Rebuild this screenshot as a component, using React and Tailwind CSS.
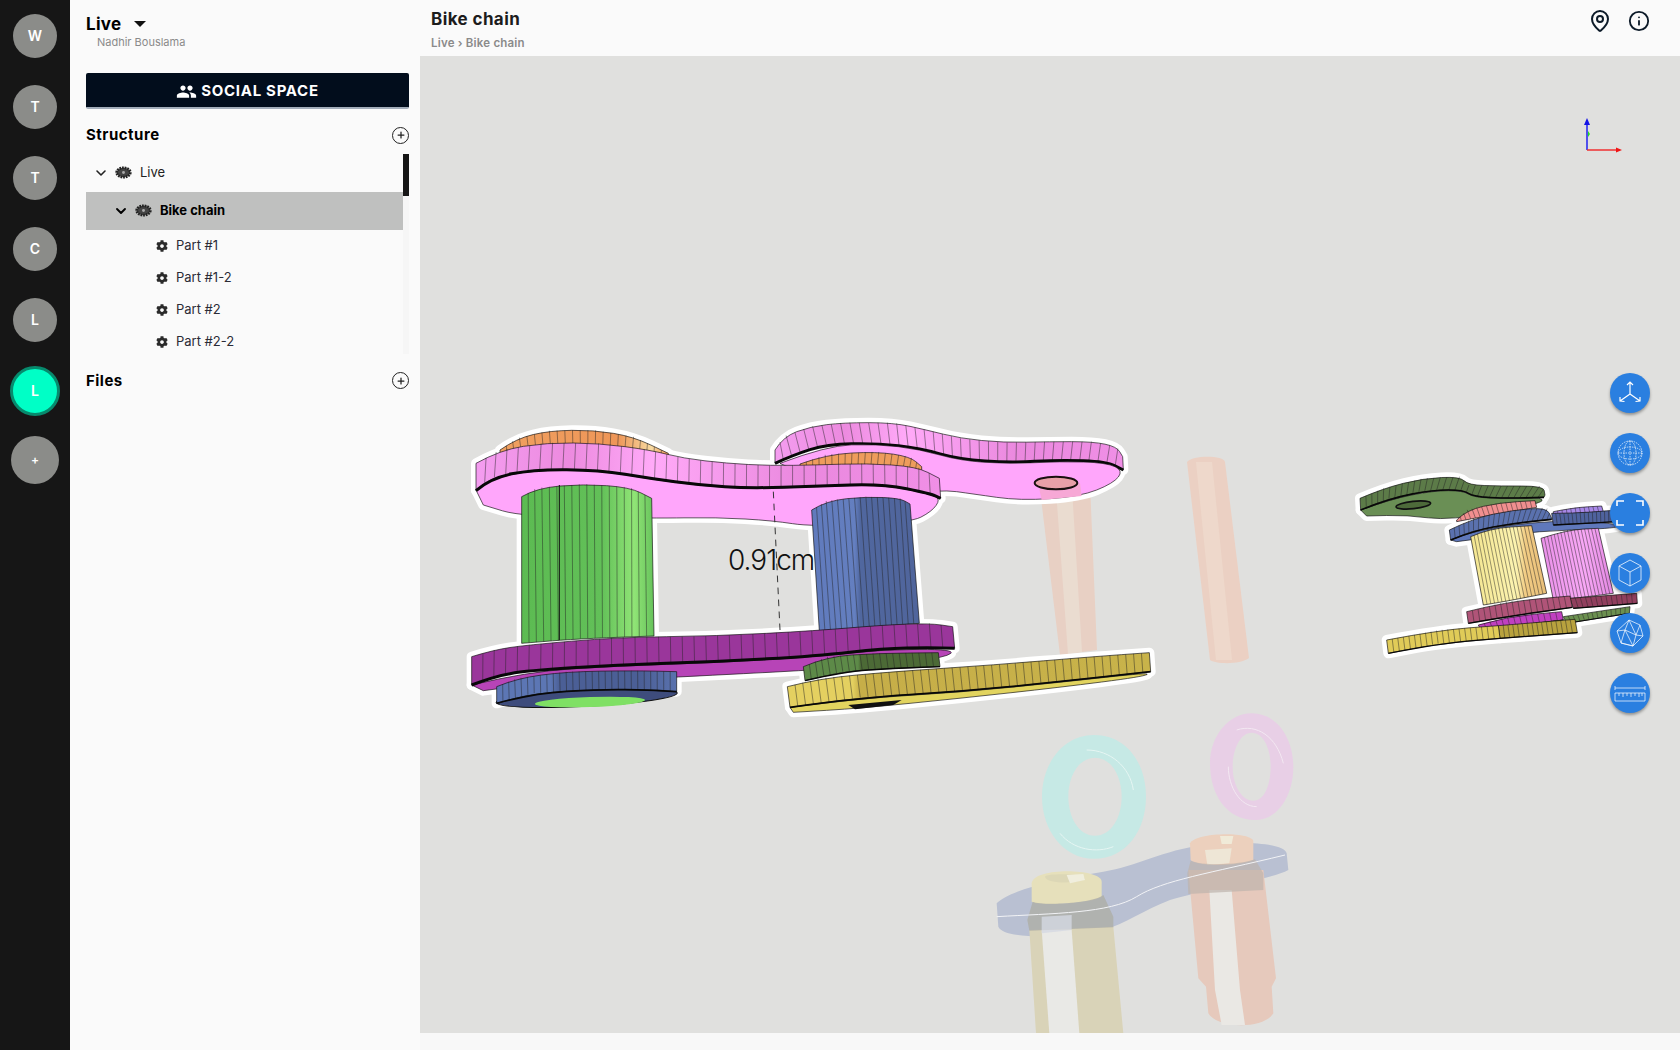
import { Info, ChevronDown, Plus, MapPin } from "lucide-react";
import { MdPeople } from "react-icons/md";
import { FaCog } from "react-icons/fa";

const rail = [
  { label: "W", cls: "h-11 w-11 mt-[14px] mb-[27px] bg-[#8b8c89]" },
  { label: "T", cls: "h-11 w-11 mb-[27px] bg-[#8b8c89]" },
  { label: "T", cls: "h-11 w-11 mb-[27px] bg-[#8b8c89]" },
  { label: "C", cls: "h-11 w-11 mb-[27px] bg-[#8b8c89]" },
  { label: "L", cls: "h-11 w-11 mb-[24px] bg-[#8b8c89]" },
  { label: "L", cls: "h-[50px] w-[50px] mb-[20px] bg-[#00ffc6] border-[3px] border-[#078a6d] font-normal" },
  { label: "+", cls: "h-12 w-12 bg-[#8b8c89] text-xs" },
];

const partRows = ["Part #1", "Part #1-2", "Part #2", "Part #2-2"];

// smooth line through points, so the links don't look like polygons
const curve = (p, cmd = "M") => {
  let d = `${cmd}${p[0][0]} ${p[0][1]}`;
  for (let i = 1; i < p.length - 1; i++) {
    const mx = (p[i][0] + p[i + 1][0]) / 2;
    const my = (p[i][1] + p[i + 1][1]) / 2;
    d += ` Q${p[i][0]} ${p[i][1]} ${mx} ${my}`;
  }
  const last = p[p.length - 1];
  return `${d} L${last[0]} ${last[1]}`;
};

const sample = (p, t) => {
  const lens = p.slice(1).map((q, i) => Math.hypot(q[0] - p[i][0], q[1] - p[i][1]));
  let left = lens.reduce((a, b) => a + b, 0) * t;
  for (let i = 0; i < lens.length; i++) {
    if (left <= lens[i]) {
      const k = left / lens[i];
      return [p[i][0] + (p[i + 1][0] - p[i][0]) * k, p[i][1] + (p[i + 1][1] - p[i][1]) * k];
    }
    left -= lens[i];
  }
  return p[p.length - 1];
};

const band = (top, bottom, fill, ribs, edge = 9) => ({
  d: `${curve(top)} ${curve([...bottom].reverse(), "L")} Z`,
  fill,
  top,
  bottom,
  ribs,
  edge,
});

const flat = (points, fill) => ({ d: `${curve(points)} Z`, fill });

const shift = (p, dx) => p.map(([x, y]) => [x + dx, y]);

const Shape = ({ s, scale }) => {
  if (s.node) return s.node;
  return (
    <g>
      <path d={s.d} fill={s.fill} stroke="#111" strokeWidth={2} />
      {s.ribs
        ? Array.from({ length: s.ribs }, (_, i) => {
            const t = (i + 1) / (s.ribs + 1);
            const a = sample(s.top, t);
            const b = sample(s.bottom, t);
            return <line key={i} x1={a[0]} y1={a[1]} x2={b[0]} y2={b[1]} stroke="#222" strokeOpacity={0.7} strokeWidth={scale} />;
          })
        : null}
      {s.edge ? <path d={curve(s.bottom)} fill="none" stroke="#080808" strokeWidth={s.edge} /> : null}
    </g>
  );
};

const Model = ({ shapes, x, y, scale = 2 }) => (
  <g transform={`translate(${x} ${y}) scale(${1 / 3})`}>
    {shapes.filter((s) => s.d).map((s, i) => (
      <path key={i} d={s.d} fill="#fff" stroke="#fff" strokeWidth={30} strokeLinejoin="round" />
    ))}
    {shapes.map((s, i) => (
      <Shape key={i} s={s} scale={scale} />
    ))}
  </g>
);

const Z6 = 930; // second crop of the big link is offset by this much

const bigLink = [
  band(
    shift([[45, 150], [70, 110], [150, 80], [250, 68], [400, 68], [500, 90], [600, 115], [730, 128], [870, 125], [1000, 125], [1070, 140], [1088, 170]], Z6),
    shift([[45, 190], [100, 165], [200, 133], [350, 130], [480, 145], [600, 178], [750, 188], [900, 180], [1040, 185], [1090, 210]], Z6),
    "url(#pinkBand)",
    38
  ),
  flat(shift([[60, 190], [200, 137], [350, 132], [480, 148], [600, 182], [750, 192], [900, 184], [1040, 188], [1090, 212], [1060, 250], [960, 290], [780, 302], [640, 282], [540, 268], [300, 300]], Z6), "#ffa6fb"),
  {
    node: (
      <g>
        <path d={`M${Z6 + 838} 268 L${Z6 + 960} 250 L${Z6 + 965} 288 L${Z6 + 845} 300 Z`} fill="#f7a8d6" />
        <ellipse cx={Z6 + 888} cy={249} rx={64} ry={19} fill="#e8a0a8" stroke="#1a1010" strokeWidth={6} />
      </g>
    ),
  },
  band(shift([[120, 192], [200, 163], [350, 155], [450, 170], [485, 200]], Z6), shift([[120, 215], [300, 215], [485, 215]], Z6), "#ee9c5c", 18, 0),
  band([[150, 150], [200, 115], [300, 92], [430, 90], [550, 110], [655, 160]], [[150, 170], [300, 170], [500, 170], [655, 170]], "url(#orangeBand)", 22, 0),
  flat([[78, 270], [120, 237], [250, 210], [450, 212], [600, 237], [750, 257], [900, 267], [1100, 260], [1300, 254], [1440, 282], [1472, 297], [1445, 335], [1380, 368], [1085, 380], [970, 362], [800, 352], [610, 355], [215, 350], [100, 315]], "#ffa6fb"),
  band(
    [[78, 190], [150, 150], [290, 128], [450, 130], [600, 150], [700, 175], [830, 190], [960, 197], [1100, 195], [1250, 190], [1400, 200], [1468, 235]],
    [[78, 272], [120, 235], [250, 208], [450, 210], [600, 235], [750, 255], [900, 265], [1100, 258], [1300, 252], [1440, 280], [1472, 295]],
    "url(#pinkBand)",
    40
  ),
  {
    node: (
      <g>
        <line x1={970} y1={275} x2={990} y2={690} stroke="#333" strokeWidth={3} strokeDasharray="20 16" />
        <text x={834} y={510} fontFamily="Inter, sans-serif" fontWeight={300} fontSize={84} fill="#111" letterSpacing={-3}>0.91cm</text>
      </g>
    ),
  },
  band([[215, 290], [260, 264], [400, 252], [540, 262], [605, 295]], [[215, 730], [400, 715], [612, 708]], "url(#greenCyl)", 17, 0),
  band([[1085, 330], [1130, 302], [1250, 290], [1350, 295], [1380, 312]], [[1108, 692], [1250, 682], [1408, 670]], "url(#blueCyl)", 17, 0),
  {
    node: <line x1={328} y1={255} x2={328} y2={720} stroke="#111" strokeWidth={3} />,
  },
  flat([[65, 855], [230, 815], [500, 798], [800, 788], [1100, 770], [1300, 748], [1515, 748], [1490, 772], [1300, 795], [1060, 812], [700, 830], [230, 855], [100, 872]], "#b744b7"),
  band(
    [[65, 770], [130, 750], [230, 735], [500, 712], [800, 708], [1100, 692], [1300, 675], [1440, 670], [1508, 680]],
    [[65, 855], [130, 830], [230, 812], [500, 795], [800, 785], [1100, 768], [1300, 745], [1440, 743], [1514, 745]],
    "#9a369b",
    40
  ),
  {
    node: (
      <g>
        <ellipse cx={410} cy={893} rx={272} ry={26} fill="#3e4c7c" transform="rotate(-3 410 893)" stroke="#111" strokeWidth={3} />
        <ellipse cx={420} cy={906} rx={165} ry={15} fill="#7fe064" transform="rotate(-2 420 906)" />
      </g>
    ),
  },
  band([[140, 860], [200, 835], [350, 815], [550, 812], [680, 815]], [[140, 910], [250, 880], [450, 868], [600, 870], [680, 875]], "url(#washerBlue)", 27, 5),
  band(shift([[130, 800], [200, 770], [350, 760], [535, 758]], Z6), shift([[135, 842], [250, 815], [400, 805], [540, 800]], Z6), "url(#washerGreen)", 20, 4),
  flat(shift([[90, 922], [300, 895], [600, 877], [900, 847], [1172, 817], [1150, 830], [900, 862], [600, 895], [300, 925], [100, 937]], Z6), "#e2d45f"),
  band(
    shift([[82, 860], [180, 835], [400, 815], [700, 795], [1000, 770], [1168, 758]], Z6),
    shift([[90, 922], [300, 893], [600, 875], [900, 845], [1172, 815]], Z6),
    "url(#yellowBand)",
    45,
    5
  ),
  { node: <path d={`M${Z6 + 265} 915 L${Z6 + 425} 900 L${Z6 + 400} 915 L${Z6 + 285} 928 Z`} fill="#111" /> },
];

const smallLink = [
  flat([[62, 150], [150, 118], [280, 92], [370, 92], [400, 112], [500, 116], [612, 112], [600, 132], [330, 182], [200, 165], [80, 168]], "#6a8f55"),
  band([[60, 115], [130, 85], [250, 55], [360, 50], [385, 75], [480, 78], [610, 78], [615, 105]], [[62, 150], [150, 115], [280, 90], [370, 90], [400, 110], [500, 115], [612, 112]], "#5c7b48", 30, 5),
  { node: <ellipse cx={220} cy={135} rx={52} ry={11} fill="#4d6a3a" stroke="#111" strokeWidth={5} transform="rotate(-6 220 135)" /> },
  band([[350, 180], [380, 150], [480, 128], [585, 122]], [[350, 185], [480, 160], [590, 142]], "#f08f8f", 16, 0),
  band([[640, 155], [700, 143], [785, 138]], [[640, 165], [700, 160], [790, 155]], "#a888e8", 10, 0),
  flat([[332, 240], [400, 210], [640, 180], [830, 190], [840, 205], [600, 212], [350, 245]], "#5f78bb"),
  band([[635, 160], [700, 160], [810, 152], [830, 150]], [[640, 195], [700, 192], [830, 185]], "#4f629e", 15, 4),
  band([[328, 210], [400, 175], [520, 150], [620, 143], [635, 175]], [[332, 240], [400, 212], [520, 190], [635, 178]], "#5a71ae", 20, 5),
  band([[603, 235], [680, 210], [775, 205]], [[640, 420], [730, 412], [820, 400]], "url(#pinkCyl)", 16, 0),
  band([[392, 230], [450, 205], [575, 197]], [[430, 435], [520, 420], [620, 400]], "url(#yellowCyl)", 16, 0),
  band([[690, 415], [890, 400]], [[700, 445], [892, 430]], "#913f5e", 12, 4),
  band([[380, 455], [500, 425], [690, 408]], [[385, 490], [500, 470], [697, 442]], "#b05478", 17, 4),
  band([[670, 470], [870, 440]], [[680, 490], [868, 460]], "#6c9050", 13, 3),
  band([[415, 495], [500, 470], [665, 455]], [[420, 505], [500, 500], [670, 480]], "#c040c0", 13, 3),
  band([[475, 497], [705, 478]], [[480, 535], [712, 518]], "#b8a23e", 15, 4),
  band([[140, 540], [300, 510], [475, 497]], [[145, 580], [300, 550], [480, 535]], "#e0cb58", 19, 4),
];

const Ghosts = () => (
  <g transform={`translate(970 700) scale(${1 / 3})`}>
    <path fillRule="evenodd" fill="#c6e9e5" d="M372 105 C470 105 528 190 528 290 C528 390 470 476 372 476 C280 476 216 390 216 290 C216 190 280 105 372 105 Z M375 173 C325 173 295 230 295 290 C295 350 325 407 375 407 C425 407 455 350 455 290 C455 230 425 173 375 173 Z" />
    <path d="M270 400 C310 450 380 460 430 440 M350 150 C420 150 480 200 490 270" fill="none" stroke="#e6f6f3" strokeWidth={3} />
    <path fillRule="evenodd" fill="#e8cfe6" d="M845 40 C925 40 970 120 970 200 C970 285 925 360 855 360 C770 360 720 285 720 190 C720 110 775 40 845 40 Z M845 98 C810 98 788 150 788 200 C788 255 815 302 850 302 C885 302 902 250 902 200 C902 145 880 98 845 98 Z" />
    <path d="M775 200 C775 260 810 320 860 320 M800 90 C860 70 920 110 940 190" fill="none" stroke="#f3e8f2" strokeWidth={3} />
    {/* blue link sits behind the caps, in front of the shafts */}
    <path d="M80 610 C120 570 250 540 400 515 C500 500 580 450 700 435 C800 425 940 425 950 460 L955 510 C900 540 700 570 600 600 C520 630 470 670 400 690 C300 715 100 720 85 680 Z" fill="#b9c0d2" />
    <path d="M178 690 L430 680 L460 1000 L198 1000 Z" fill="#d9d3b8" />
    <path d="M215 690 L305 690 L328 1000 L238 1000 Z" fill="#e9e9e6" />
    <path d="M185 550 C190 500 395 505 395 545 L395 590 C370 610 200 620 185 605 Z" fill="#e6e0bb" />
    <path d="M225 530 C230 520 340 520 345 535 C340 550 230 555 225 530 Z" fill="#dcd7b6" />
    <path d="M290 525 L340 522 L345 540 L300 550 Z" fill="#f0eedd" />
    <path d="M188 605 C220 618 370 610 400 585 L430 650 L430 682 L178 692 L172 660 Z" fill="#aeaea6" fillOpacity={0.8} />
    <path d="M215 650 L305 645 L305 690 L215 700 Z" fill="#d4d8e2" fillOpacity={0.8} />
    <path d="M655 510 L880 510 L918 835 L905 860 L910 940 C880 990 740 985 715 940 L708 860 L685 835 Z" fill="#e6c9bc" />
    <path d="M718 570 L785 570 L810 870 L825 975 L755 975 L735 870 Z" fill="#eae8e4" />
    <path d="M660 430 C680 395 850 395 850 425 L850 480 C800 500 680 500 662 480 Z" fill="#ecd0bd" />
    <path d="M705 450 L785 445 L778 490 L712 495 Z" fill="#eee6d6" />
    <path d="M750 408 L790 408 L785 432 L755 432 Z" fill="#f0ead8" />
    <path d="M662 482 C700 498 810 495 855 478 L880 520 L880 570 L655 582 L652 520 Z" fill="#bdb3ad" fillOpacity={0.7} />
    <path d="M80 650 C250 640 420 640 500 590 C580 540 720 520 945 465" fill="none" stroke="#f2f3f6" strokeWidth={3} />
  </g>
);

const Pins = () => (
  <g>
    <path d="M1040 490 L1090 483 L1097 650 L1060 655 Z" fill="#e8d0c4" />
    <path d="M1056 490 L1072 488 L1082 652 L1068 654 Z" fill="#eadcd0" />
    <path d="M1187 462 C1192 455 1224 455 1225 462 L1249 658 C1240 665 1215 664 1210 660 Z" fill="#ebd0c3" />
    <path d="M1196 462 L1212 462 L1232 660 L1216 660 Z" fill="#eed8cb" />
  </g>
);

const Scene = () => (
  <svg viewBox="420 56 1260 977" className="absolute inset-0 h-full w-full">
    <defs>
      <linearGradient id="pinkBand">
        <stop offset="0" stopColor="#f49df0" />
        <stop offset="0.2" stopColor="#ec8adf" />
        <stop offset="0.38" stopColor="#ffaaf8" />
        <stop offset="0.7" stopColor="#ea88de" />
        <stop offset="1" stopColor="#f08fe6" />
      </linearGradient>
      <linearGradient id="orangeBand">
        <stop offset="0" stopColor="#f0a060" />
        <stop offset="0.7" stopColor="#ee9658" />
        <stop offset="0.9" stopColor="#f7d9a0" />
        <stop offset="1" stopColor="#ee9658" />
      </linearGradient>
      <linearGradient id="greenCyl">
        <stop offset="0" stopColor="#5cbb52" />
        <stop offset="0.6" stopColor="#62c058" />
        <stop offset="0.85" stopColor="#90e476" />
        <stop offset="1" stopColor="#66c25b" />
      </linearGradient>
      <linearGradient id="blueCyl">
        <stop offset="0" stopColor="#607abc" />
        <stop offset="0.4" stopColor="#647fc0" />
        <stop offset="0.45" stopColor="#50679f" />
        <stop offset="1" stopColor="#50659c" />
      </linearGradient>
      <linearGradient id="washerBlue">
        <stop offset="0" stopColor="#5c76b4" />
        <stop offset="0.3" stopColor="#5c76b4" />
        <stop offset="0.35" stopColor="#4b5f96" />
        <stop offset="0.8" stopColor="#4b5f96" />
        <stop offset="1" stopColor="#5a72ae" />
      </linearGradient>
      <linearGradient id="washerGreen">
        <stop offset="0" stopColor="#5d8a48" />
        <stop offset="0.4" stopColor="#5d8a48" />
        <stop offset="0.42" stopColor="#4c6a36" />
        <stop offset="1" stopColor="#4c6a36" />
      </linearGradient>
      <linearGradient id="yellowBand">
        <stop offset="0" stopColor="#e4d060" />
        <stop offset="0.18" stopColor="#e4d060" />
        <stop offset="0.2" stopColor="#c6ae48" />
        <stop offset="1" stopColor="#c8b34a" />
      </linearGradient>
      <linearGradient id="yellowCyl">
        <stop offset="0" stopColor="#f4e690" />
        <stop offset="0.6" stopColor="#fcf3b0" />
        <stop offset="0.72" stopColor="#f2cc84" />
        <stop offset="1" stopColor="#e8be78" />
      </linearGradient>
      <linearGradient id="pinkCyl">
        <stop offset="0" stopColor="#ea90e9" />
        <stop offset="0.6" stopColor="#f8a8f6" />
        <stop offset="1" stopColor="#e388e2" />
      </linearGradient>
    </defs>
    <Ghosts />
    <Pins />
    <Model shapes={bigLink} x={450} y={400} />
    <Model shapes={smallLink} x={1340} y={460} scale={2} />
    {/* axes */}
    <line x1="1587" y1="150" x2="1587" y2="122" stroke="#2020f0" strokeWidth="1.5" />
    <path d="M1587 118 L1590 125 L1584 125 Z" fill="#1414e6" />
    <path d="M1588 131 L1590 134 L1588 137 Z" fill="#20e020" />
    <line x1="1587" y1="150" x2="1618" y2="150" stroke="#f03030" strokeWidth="1.5" />
    <path d="M1622 150 L1616 147.5 L1616 152.5 Z" fill="#f01414" />
  </svg>
);

const iconProps = { fill: "none", stroke: "#fff", strokeWidth: 1, viewBox: "0 0 32 32" };

const toolIcons = [
  <svg key="axes" {...iconProps} strokeWidth={1.2} className="h-8 w-8"><path d="M16 17 V5 M13 8 L16 5 L19 8 M16 17 L6 24 M6 20 L6 24 L10.5 24.5 M16 17 L26 24 M26 20 L26 24 L21.5 24.5" /></svg>,
  <svg key="globe" {...iconProps} strokeOpacity={0.7} strokeDasharray="1.5 1" className="h-8 w-8"><circle cx="16" cy="16" r="12" /><ellipse cx="16" cy="16" rx="6" ry="12" /><ellipse cx="16" cy="16" rx="12" ry="6" /><path d="M4 16 H28 M16 4 V28" /></svg>,
  <svg key="fit" {...iconProps} strokeWidth={1.6} className="h-8 w-8"><path d="M3 9 V4 H10 M22 4 H29 V9 M29 23 V28 H22 M10 28 H3 V23" /></svg>,
  <svg key="cube" {...iconProps} strokeOpacity={0.75} className="h-8 w-8"><path d="M16 3 L27 9 V23 L16 29 L5 23 V9 Z M5 9 L16 15 L27 9 M16 15 V29" /></svg>,
  <svg key="ico" {...iconProps} strokeOpacity={0.7} className="h-8 w-8"><path d="M15 3 L26 8 L29 19 L19 29 L7 26 L3 14 Z M15 3 L11 13 L22 18 L26 8 M3 14 L11 13 L7 26 L19 29 L22 18 L29 19 M11 13 L19 29 M15 3 L22 18" /></svg>,
  <svg key="ruler" {...iconProps} strokeOpacity={0.7} className="h-8 w-8"><path d="M1 11 H31 M1 9 V13 M31 9 V13 M1 16 H31 V24 H1 Z M5 16 V19 M9 16 V20 M13 16 V19 M17 16 V20 M21 16 V19 M25 16 V20 M28 16 V19" /></svg>,
];

// wide double cog used for the assemblies in the tree
const AssemblyIcon = () => (
  <svg viewBox="0 0 16 12" className="h-[13px] w-[17px] shrink-0">
    <ellipse cx="8" cy="6" rx="6.4" ry="4.4" fill="#444" stroke="#222" strokeWidth="2.6" strokeDasharray="1.6 0.8" />
    <circle cx="8" cy="6" r="1.4" fill="#aaa" />
  </svg>
);

const SectionTitle = ({ title, className }) => (
  <div className={`flex items-center justify-between ${className}`}>
    <h3 className="text-[15px] font-bold tracking-[0.5px] text-black">{title}</h3>
    <button className="flex h-[17px] w-[17px] items-center justify-center rounded-full border-[1.5px] border-[#222]">
      <Plus size={10} strokeWidth={3} color="#222" />
    </button>
  </div>
);

export default function App() {
  return (
    <div className="flex h-screen w-full overflow-hidden bg-[#fafafa] font-['Inter',sans-serif]">
      <nav className="flex w-[70px] shrink-0 flex-col items-center bg-[#161616]">
        {rail.map((item, index) => (
          <div key={index} className={`flex shrink-0 items-center justify-center rounded-full text-sm font-semibold text-white ${item.cls}`}>
            {item.label}
          </div>
        ))}
      </nav>

      <aside className="flex w-[350px] shrink-0 flex-col pl-4 pr-[11px]">
        <div className="flex items-center gap-[13px] pt-[14px]">
          <span className="text-[17px] font-bold leading-5 tracking-[0.3px] text-black">Live</span>
          <span className="h-0 w-0 border-x-[6px] border-t-[6px] border-x-transparent border-t-[#111]"></span>
        </div>
        <p className="pl-[11px] pt-[1px] text-[11px] leading-[14px] text-[#8a8a8a]">Nadhir Bouslama</p>

        <button className="mt-[24px] flex h-9 items-center justify-center gap-1 rounded-[2px] border-b-2 border-[#a3adba] bg-[#020d1c] pt-[3px] text-[15px] font-bold tracking-[0.7px] text-white">
          <MdPeople size={21} />
          SOCIAL SPACE
        </button>

        <SectionTitle title="Structure" className="mt-[15px]" />

        <div className="mt-[7px] flex h-[200px]">
          <div className="flex-1">
            <div className="flex h-[38px] items-center pl-[7px] text-[13px] text-[#222]">
              <ChevronDown size={16} strokeWidth={2.4} className="mr-[6px]" />
              <AssemblyIcon />
              <span className="ml-[8px]">Live</span>
            </div>
            <div className="flex h-[38px] items-center bg-[#bfc0bf] pl-[27px] text-[13px] font-bold text-black">
              <ChevronDown size={16} strokeWidth={2.8} className="mr-[6px]" />
              <AssemblyIcon />
              <span className="ml-[8px]">Bike chain</span>
            </div>
            {partRows.map((part) => (
              <div key={part} className="flex h-8 items-center pl-[70px] text-[13px] text-[#2b2b36]">
                <FaCog size={12} color="#2a2a2a" className="mr-[8px]" />
                {part}
              </div>
            ))}
          </div>
          <div className="w-[6px] bg-[#f6f6f6]">
            <div className="h-[42px] w-full bg-[#161616]"></div>
          </div>
        </div>

        <SectionTitle title="Files" className="mt-[16px]" />
      </aside>

      <main className="flex min-w-0 flex-1 flex-col">
        <header className="flex h-14 shrink-0 items-start justify-between pl-[11px] pr-[30px]">
          <div>
            <h1 className="pt-[9px] text-[17px] font-bold leading-5 tracking-[0.4px] text-[#1c1c1c]">Bike chain</h1>
            <p className="pt-[7px] text-[11.5px] font-semibold leading-[14px] tracking-[0.2px] text-[#8a8a8a]">Live › Bike chain</p>
          </div>
          <div className="flex items-center gap-[16px] pt-[9px]">
            <MapPin size={24} color="#0c1a28" strokeWidth={2} />
            <Info size={22} color="#0c1a28" strokeWidth={2} />
          </div>
        </header>

        <div className="relative min-h-0 flex-1 bg-[#e0e0de]">
          <Scene />
          <div className="absolute right-[30px] top-[317px] flex flex-col gap-5">
            {toolIcons.map((icon, index) => (
              <button key={index} className="flex h-10 w-10 items-center justify-center rounded-full bg-[#2a7fe0] shadow-[0_2px_3px_rgba(0,0,0,0.35)]">
                {icon}
              </button>
            ))}
          </div>
        </div>
        <div className="h-[17px] shrink-0 bg-[#f8f8f8]"></div>
      </main>
    </div>
  );
}
